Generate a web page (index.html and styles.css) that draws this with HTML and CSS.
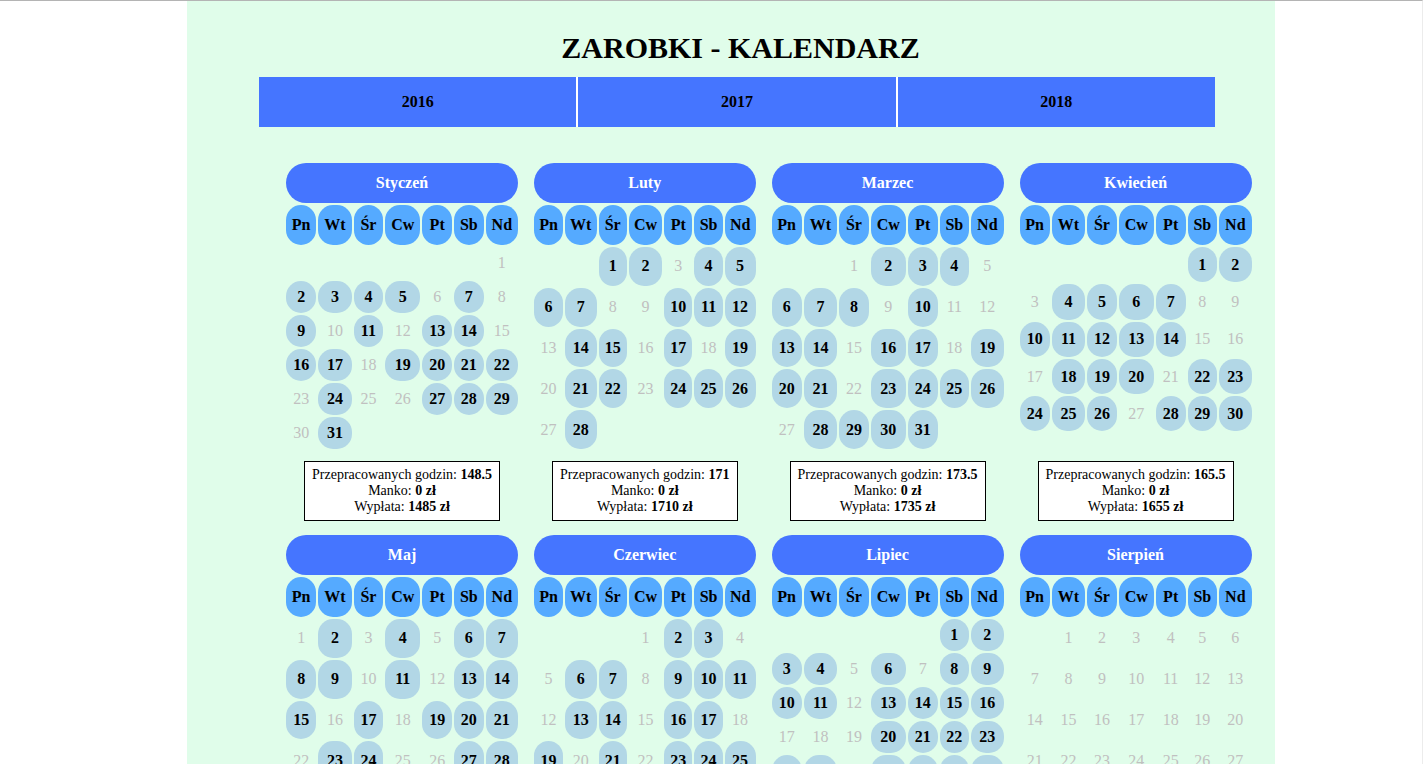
FILE: index.html
```html
<!DOCTYPE html>
<html lang="pl">
<head>
<meta charset="utf-8">
<title>Zarobki - Kalendarz</title>
<link rel="stylesheet" href="styles.css">
</head>
<body>
<div class="page">
  <h1 class="title">ZAROBKI - KALENDARZ</h1>
  <nav class="years">
    <a class="year">2016</a>
    <a class="year">2017</a>
    <a class="year">2018</a>
  </nav>
  <div class="months">

    <section class="month">
      <table class="cal">
        <thead>
          <tr><th colspan="7" class="month-name">Styczeń</th></tr>
          <tr class="dow"><th>Pn</th><th>Wt</th><th>Śr</th><th>Cw</th><th>Pt</th><th>Sb</th><th>Nd</th></tr>
        </thead>
        <tbody>
          <tr><td></td><td></td><td></td><td></td><td></td><td></td><td class="free">1</td></tr>
          <tr><td class="work">2</td><td class="work">3</td><td class="work">4</td><td class="work">5</td><td class="free">6</td><td class="work">7</td><td class="free">8</td></tr>
          <tr><td class="work">9</td><td class="free">10</td><td class="work">11</td><td class="free">12</td><td class="work">13</td><td class="work">14</td><td class="free">15</td></tr>
          <tr><td class="work">16</td><td class="work">17</td><td class="free">18</td><td class="work">19</td><td class="work">20</td><td class="work">21</td><td class="work">22</td></tr>
          <tr><td class="free">23</td><td class="work">24</td><td class="free">25</td><td class="free">26</td><td class="work">27</td><td class="work">28</td><td class="work">29</td></tr>
          <tr><td class="free">30</td><td class="work">31</td><td></td><td></td><td></td><td></td><td></td></tr>
        </tbody>
      </table>
      <div class="summary">Przepracowanych godzin: <b>148.5</b><br>Manko: <b>0 zł</b><br>Wypłata: <b>1485 zł</b></div>
    </section>

    <section class="month">
      <table class="cal">
        <thead>
          <tr><th colspan="7" class="month-name">Luty</th></tr>
          <tr class="dow"><th>Pn</th><th>Wt</th><th>Śr</th><th>Cw</th><th>Pt</th><th>Sb</th><th>Nd</th></tr>
        </thead>
        <tbody>
          <tr><td></td><td></td><td class="work">1</td><td class="work">2</td><td class="free">3</td><td class="work">4</td><td class="work">5</td></tr>
          <tr><td class="work">6</td><td class="work">7</td><td class="free">8</td><td class="free">9</td><td class="work">10</td><td class="work">11</td><td class="work">12</td></tr>
          <tr><td class="free">13</td><td class="work">14</td><td class="work">15</td><td class="free">16</td><td class="work">17</td><td class="free">18</td><td class="work">19</td></tr>
          <tr><td class="free">20</td><td class="work">21</td><td class="work">22</td><td class="free">23</td><td class="work">24</td><td class="work">25</td><td class="work">26</td></tr>
          <tr><td class="free">27</td><td class="work">28</td><td></td><td></td><td></td><td></td><td></td></tr>
        </tbody>
      </table>
      <div class="summary">Przepracowanych godzin: <b>171</b><br>Manko: <b>0 zł</b><br>Wypłata: <b>1710 zł</b></div>
    </section>

    <section class="month">
      <table class="cal">
        <thead>
          <tr><th colspan="7" class="month-name">Marzec</th></tr>
          <tr class="dow"><th>Pn</th><th>Wt</th><th>Śr</th><th>Cw</th><th>Pt</th><th>Sb</th><th>Nd</th></tr>
        </thead>
        <tbody>
          <tr><td></td><td></td><td class="free">1</td><td class="work">2</td><td class="work">3</td><td class="work">4</td><td class="free">5</td></tr>
          <tr><td class="work">6</td><td class="work">7</td><td class="work">8</td><td class="free">9</td><td class="work">10</td><td class="free">11</td><td class="free">12</td></tr>
          <tr><td class="work">13</td><td class="work">14</td><td class="free">15</td><td class="work">16</td><td class="work">17</td><td class="free">18</td><td class="work">19</td></tr>
          <tr><td class="work">20</td><td class="work">21</td><td class="free">22</td><td class="work">23</td><td class="work">24</td><td class="work">25</td><td class="work">26</td></tr>
          <tr><td class="free">27</td><td class="work">28</td><td class="work">29</td><td class="work">30</td><td class="work">31</td><td></td><td></td></tr>
        </tbody>
      </table>
      <div class="summary">Przepracowanych godzin: <b>173.5</b><br>Manko: <b>0 zł</b><br>Wypłata: <b>1735 zł</b></div>
    </section>

    <section class="month">
      <table class="cal">
        <thead>
          <tr><th colspan="7" class="month-name">Kwiecień</th></tr>
          <tr class="dow"><th>Pn</th><th>Wt</th><th>Śr</th><th>Cw</th><th>Pt</th><th>Sb</th><th>Nd</th></tr>
        </thead>
        <tbody>
          <tr><td></td><td></td><td></td><td></td><td></td><td class="work">1</td><td class="work">2</td></tr>
          <tr><td class="free">3</td><td class="work">4</td><td class="work">5</td><td class="work">6</td><td class="work">7</td><td class="free">8</td><td class="free">9</td></tr>
          <tr><td class="work">10</td><td class="work">11</td><td class="work">12</td><td class="work">13</td><td class="work">14</td><td class="free">15</td><td class="free">16</td></tr>
          <tr><td class="free">17</td><td class="work">18</td><td class="work">19</td><td class="work">20</td><td class="free">21</td><td class="work">22</td><td class="work">23</td></tr>
          <tr><td class="work">24</td><td class="work">25</td><td class="work">26</td><td class="free">27</td><td class="work">28</td><td class="work">29</td><td class="work">30</td></tr>
          <tr><td></td><td></td><td></td><td></td><td></td><td></td><td></td></tr>
        </tbody>
      </table>
      <div class="summary">Przepracowanych godzin: <b>165.5</b><br>Manko: <b>0 zł</b><br>Wypłata: <b>1655 zł</b></div>
    </section>

    <section class="month">
      <table class="cal">
        <thead>
          <tr><th colspan="7" class="month-name">Maj</th></tr>
          <tr class="dow"><th>Pn</th><th>Wt</th><th>Śr</th><th>Cw</th><th>Pt</th><th>Sb</th><th>Nd</th></tr>
        </thead>
        <tbody>
          <tr><td class="free">1</td><td class="work">2</td><td class="free">3</td><td class="work">4</td><td class="free">5</td><td class="work">6</td><td class="work">7</td></tr>
          <tr><td class="work">8</td><td class="work">9</td><td class="free">10</td><td class="work">11</td><td class="free">12</td><td class="work">13</td><td class="work">14</td></tr>
          <tr><td class="work">15</td><td class="free">16</td><td class="work">17</td><td class="free">18</td><td class="work">19</td><td class="work">20</td><td class="work">21</td></tr>
          <tr><td class="free">22</td><td class="work">23</td><td class="work">24</td><td class="free">25</td><td class="free">26</td><td class="work">27</td><td class="work">28</td></tr>
          <tr><td class="work">29</td><td class="free">30</td><td class="work">31</td><td></td><td></td><td></td><td></td></tr>
        </tbody>
      </table>
      <div class="summary">Przepracowanych godzin: <b>150.5</b><br>Manko: <b>0 zł</b><br>Wypłata: <b>1505 zł</b></div>
    </section>

    <section class="month">
      <table class="cal">
        <thead>
          <tr><th colspan="7" class="month-name">Czerwiec</th></tr>
          <tr class="dow"><th>Pn</th><th>Wt</th><th>Śr</th><th>Cw</th><th>Pt</th><th>Sb</th><th>Nd</th></tr>
        </thead>
        <tbody>
          <tr><td></td><td></td><td></td><td class="free">1</td><td class="work">2</td><td class="work">3</td><td class="free">4</td></tr>
          <tr><td class="free">5</td><td class="work">6</td><td class="work">7</td><td class="free">8</td><td class="work">9</td><td class="work">10</td><td class="work">11</td></tr>
          <tr><td class="free">12</td><td class="work">13</td><td class="work">14</td><td class="free">15</td><td class="work">16</td><td class="work">17</td><td class="free">18</td></tr>
          <tr><td class="work">19</td><td class="free">20</td><td class="work">21</td><td class="free">22</td><td class="work">23</td><td class="work">24</td><td class="work">25</td></tr>
          <tr><td class="work">26</td><td class="work">27</td><td class="free">28</td><td class="work">29</td><td class="work">30</td><td></td><td></td></tr>
        </tbody>
      </table>
      <div class="summary">Przepracowanych godzin: <b>168</b><br>Manko: <b>0 zł</b><br>Wypłata: <b>1680 zł</b></div>
    </section>

    <section class="month">
      <table class="cal">
        <thead>
          <tr><th colspan="7" class="month-name">Lipiec</th></tr>
          <tr class="dow"><th>Pn</th><th>Wt</th><th>Śr</th><th>Cw</th><th>Pt</th><th>Sb</th><th>Nd</th></tr>
        </thead>
        <tbody>
          <tr><td></td><td></td><td></td><td></td><td></td><td class="work">1</td><td class="work">2</td></tr>
          <tr><td class="work">3</td><td class="work">4</td><td class="free">5</td><td class="work">6</td><td class="free">7</td><td class="work">8</td><td class="work">9</td></tr>
          <tr><td class="work">10</td><td class="work">11</td><td class="free">12</td><td class="work">13</td><td class="work">14</td><td class="work">15</td><td class="work">16</td></tr>
          <tr><td class="free">17</td><td class="free">18</td><td class="free">19</td><td class="work">20</td><td class="work">21</td><td class="work">22</td><td class="work">23</td></tr>
          <tr><td class="work">24</td><td class="work">25</td><td class="free">26</td><td class="work">27</td><td class="work">28</td><td class="work">29</td><td class="work">30</td></tr>
          <tr><td class="work">31</td><td></td><td></td><td></td><td></td><td></td><td></td></tr>
        </tbody>
      </table>
      <div class="summary">Przepracowanych godzin: <b>172.5</b><br>Manko: <b>0 zł</b><br>Wypłata: <b>1725 zł</b></div>
    </section>

    <section class="month">
      <table class="cal">
        <thead>
          <tr><th colspan="7" class="month-name">Sierpień</th></tr>
          <tr class="dow"><th>Pn</th><th>Wt</th><th>Śr</th><th>Cw</th><th>Pt</th><th>Sb</th><th>Nd</th></tr>
        </thead>
        <tbody>
          <tr><td></td><td class="free">1</td><td class="free">2</td><td class="free">3</td><td class="free">4</td><td class="free">5</td><td class="free">6</td></tr>
          <tr><td class="free">7</td><td class="free">8</td><td class="free">9</td><td class="free">10</td><td class="free">11</td><td class="free">12</td><td class="free">13</td></tr>
          <tr><td class="free">14</td><td class="free">15</td><td class="free">16</td><td class="free">17</td><td class="free">18</td><td class="free">19</td><td class="free">20</td></tr>
          <tr><td class="free">21</td><td class="free">22</td><td class="free">23</td><td class="free">24</td><td class="free">25</td><td class="free">26</td><td class="free">27</td></tr>
          <tr><td class="free">28</td><td class="free">29</td><td class="free">30</td><td class="free">31</td><td></td><td></td><td></td></tr>
        </tbody>
      </table>
      <div class="summary">Przepracowanych godzin: <b>0</b><br>Manko: <b>0 zł</b><br>Wypłata: <b>0 zł</b></div>
    </section>

  </div>
</div>
</body>
</html>
```

FILE: styles.css
```css
* {
  box-sizing: border-box;
}

html,
body {
  margin: 0;
}

body {
  background: #ffffff;
  border-top: 1px solid #b4b4b4;
  border-right: 1px solid #ececec;
  font-family: "Liberation Serif", "Times New Roman", serif;
  color: #000000;
}

.page {
  margin-left: 187px;
  width: 1088px;
  min-height: 763px;
  background: #e0fdea;
  padding: 29px 60px 24px 72px;
}

.title {
  margin: 0 0 11px;
  padding-left: 7px;
  font-size: 30px;
  line-height: 36px;
  font-weight: bold;
  text-align: center;
}

.years {
  display: flex;
  gap: 2px;
  height: 50px;
  background: #ffffff;
}

.year {
  flex: 1;
  display: flex;
  align-items: center;
  justify-content: center;
  background: #4575ff;
  font-size: 16px;
  font-weight: bold;
  color: #000000;
}

.months {
  display: grid;
  grid-template-columns: repeat(4, max-content);
  column-gap: 12px;
  row-gap: 12px;
  margin: 34px 0 0 25px;
}

.month {
  display: flex;
  flex-direction: column;
}

.cal {
  width: 100%;
  height: 290px;
  border-spacing: 2px;
  font-size: 16px;
}

.cal th,
.cal td {
  text-align: center;
  vertical-align: middle;
  line-height: 18px;
}

.cal th {
  height: 40px;
  padding: 0 4px;
  font-weight: bold;
}

.dow th,
.cal td {
  box-sizing: content-box;
  width: 18px;
  padding-left: 5px;
  padding-right: 5px;
}

.cal td {
  padding-top: 7px;
  padding-bottom: 7px;
  border-radius: 15px;
}

.month-name {
  background: #4575ff;
  color: #ffffff;
  border-radius: 20px;
}

.dow th {
  background: #55aaff;
  border-radius: 15px;
}

.cal td.work {
  background: #b2d7e6;
  font-weight: bold;
}

.cal td.free {
  color: #c0c0c0;
}

.summary {
  align-self: center;
  margin: 10px 20px 0;
  padding: 5px 7px;
  background: #ffffff;
  border: 1px solid #000000;
  font-size: 14px;
  text-align: center;
}
```
